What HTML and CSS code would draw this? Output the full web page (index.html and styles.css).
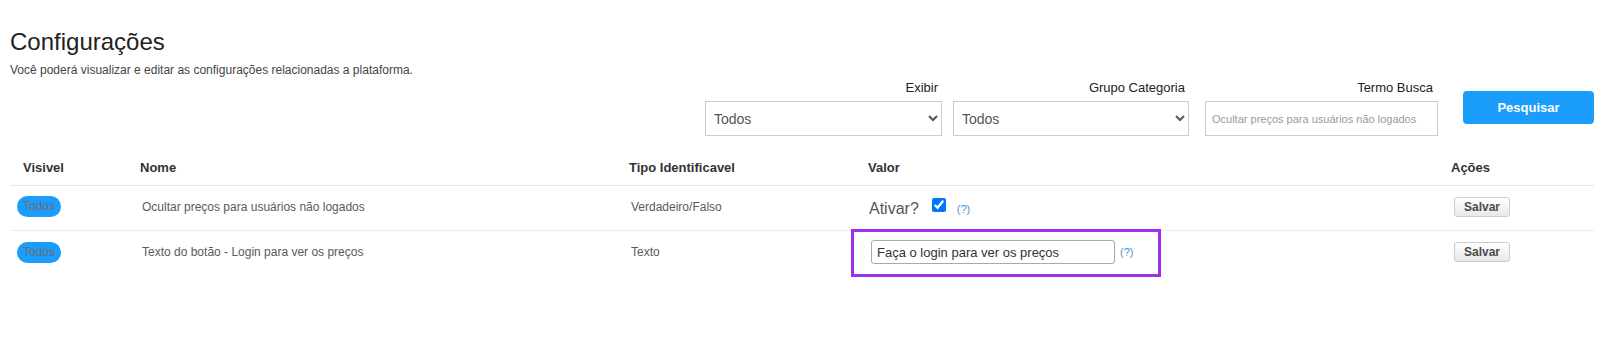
FILE: index.html
```html
<!DOCTYPE html>
<html lang="pt-BR">
<head>
    <meta charset="UTF-8">
    <meta name="viewport" content="width=device-width, initial-scale=1.0">
    <title>Configurações</title>
    <link rel="stylesheet" href="styles.css">
</head>
<body>
    <div class="page">
        <h1 class="title">Configurações</h1>
        <p class="subtitle">Você poderá visualizar e editar as configurações relacionadas a plataforma.</p>

        <form class="filters" onsubmit="return false">
            <div class="field field-exibir">
                <label for="exibir">Exibir</label>
                <select id="exibir">
                    <option>Todos</option>
                </select>
            </div>
            <div class="field field-grupo">
                <label for="grupo">Grupo Categoria</label>
                <select id="grupo">
                    <option>Todos</option>
                </select>
            </div>
            <div class="field field-termo">
                <label for="termo">Termo Busca</label>
                <input id="termo" type="text" placeholder="Ocultar preços para usuários não logados">
            </div>
            <button class="btn-search" type="submit">Pesquisar</button>
        </form>

        <table class="config-table">
            <colgroup>
                <col class="col-visivel">
                <col class="col-nome">
                <col class="col-tipo">
                <col class="col-valor">
                <col class="col-acoes">
            </colgroup>
            <thead>
                <tr>
                    <th class="cell-visivel">Visivel</th>
                    <th>Nome</th>
                    <th>Tipo Identificavel</th>
                    <th>Valor</th>
                    <th>Ações</th>
                </tr>
            </thead>
            <tbody>
                <tr>
                    <td class="cell-visivel"><span class="badge">Todos</span></td>
                    <td class="cell-nome">Ocultar preços para usuários não logados</td>
                    <td class="cell-tipo">Verdadeiro/Falso</td>
                    <td class="cell-valor">
                        <div class="valor-bool">
                            <span class="ativar">Ativar?</span>
                            <input class="check" type="checkbox" checked>
                            <a class="help" href="#">(<b>?</b>)</a>
                        </div>
                    </td>
                    <td class="cell-acoes"><button class="btn-save">Salvar</button></td>
                </tr>
                <tr>
                    <td class="cell-visivel"><span class="badge">Todos</span></td>
                    <td class="cell-nome">Texto do botão - Login para ver os preços</td>
                    <td class="cell-tipo">Texto</td>
                    <td class="cell-valor">
                        <div class="highlight">
                            <input class="text-input" type="text" value="Faça o login para ver os preços">
                            <a class="help" href="#">(<b>?</b>)</a>
                        </div>
                    </td>
                    <td class="cell-acoes"><button class="btn-save">Salvar</button></td>
                </tr>
            </tbody>
        </table>
    </div>
</body>
</html>
```

FILE: styles.css
```css
body {
    margin: 0;
    padding: 0;
    background-color: #ffffff;
    font-family: "Liberation Sans", Arial, Helvetica, sans-serif;
    color: #333333;
}

.page {
    padding: 27px 6px 60px 10px;
}

.title {
    margin: 0;
    font-size: 24px;
    line-height: 29px;
    font-weight: normal;
    color: #222222;
}

.subtitle {
    margin: 6px 0 0;
    font-size: 12px;
    line-height: 16px;
    color: #444444;
}

.filters {
    display: flex;
    justify-content: flex-end;
    align-items: flex-start;
    margin-top: 2px;
}

.field {
    display: flex;
    flex-direction: column;
}

.field label {
    text-align: right;
    font-size: 13px;
    line-height: 16px;
    padding-right: 4px;
    margin-bottom: 5px;
    color: #222222;
}

.field-exibir {
    width: 237px;
}

.field-grupo {
    width: 236px;
    margin-left: 11px;
}

.field-termo {
    width: 233px;
    margin-left: 16px;
}

.field-termo label {
    padding-right: 5px;
}

.field select,
.field input {
    box-sizing: border-box;
    height: 35px;
    border: 1px solid #cccccc;
    border-radius: 0;
    background-color: #ffffff;
    font-family: inherit;
    outline: none;
}

.field select {
    font-size: 14px;
    color: #555555;
    padding: 0 4px;
}

.field input {
    font-size: 11px;
    padding: 0 6px;
    color: #555555;
}

.field input::placeholder {
    color: #9a9a9a;
}

.btn-search {
    width: 131px;
    height: 33px;
    margin-top: 11px;
    margin-left: 25px;
    border: none;
    border-radius: 4px;
    background-color: #1b9dfc;
    color: #ffffff;
    font-family: inherit;
    font-size: 13px;
    font-weight: bold;
    cursor: pointer;
}

.config-table {
    width: 100%;
    margin-top: 13px;
    border-collapse: separate;
    border-spacing: 0;
    table-layout: fixed;
}

.col-visivel { width: 122px; }
.col-nome { width: 489px; }
.col-tipo { width: 239px; }
.col-valor { width: 583px; }
.col-acoes { width: 151px; }

.config-table th {
    text-align: left;
    padding: 11px 8px 9px;
    font-size: 13px;
    line-height: 16px;
    font-weight: bold;
    color: #333333;
    border-bottom: 1px solid #e6e6e6;
}

.config-table th.cell-visivel {
    padding-left: 13px;
}

.config-table td {
    box-sizing: border-box;
    height: 45px;
    padding: 0 8px 3px;
    font-size: 12px;
    color: #5a5a5a;
    vertical-align: middle;
    border-bottom: 1px solid #ececec;
}

.config-table tbody tr:last-child td {
    border-bottom: none;
}

.config-table td.cell-visivel {
    padding-left: 7px;
}

.config-table td.cell-nome {
    padding-left: 10px;
}

.config-table td.cell-tipo {
    padding-left: 10px;
}

.config-table td.cell-valor {
    padding-left: 9px;
}

.config-table td.cell-acoes {
    padding-left: 11px;
}

.badge {
    display: inline-block;
    height: 21px;
    line-height: 21px;
    padding: 0 6px;
    border-radius: 11px;
    background-color: #1b9dfc;
    color: #6e6e6e;
    font-size: 12px;
}

.valor-bool {
    display: flex;
    align-items: flex-start;
    height: 20px;
    margin-top: 3px;
}

.ativar {
    font-size: 16px;
    line-height: 18px;
    margin-top: 2px;
    color: #555555;
    margin-right: 13px;
}

.check {
    width: 14px;
    height: 14px;
    margin: 0 11px 0 0;
    accent-color: #0075ff;
}

.help {
    font-size: 11px;
    line-height: 13px;
    color: #6b8bb0;
    text-decoration: none;
}

.valor-bool .help {
    margin-top: 5px;
}

.help b {
    font-weight: normal;
    color: #1b9dfc;
}

.highlight {
    box-sizing: border-box;
    display: flex;
    align-items: center;
    gap: 5px;
    width: 310px;
    height: 48px;
    margin: -2px 0 -4px -18px;
    padding: 0 0 2px 17px;
    border: 3px solid #a32cf5;
}

.text-input {
    box-sizing: border-box;
    width: 244px;
    height: 24px;
    padding: 0 5px;
    border: 1px solid #a9a9a9;
    border-radius: 3px;
    font-family: inherit;
    font-size: 13px;
    color: #333333;
    outline: none;
}

.btn-save {
    height: 20px;
    padding: 0 9px;
    border: 1px solid #cccccc;
    border-radius: 3px;
    background: linear-gradient(#ffffff, #e8e8e8);
    color: #4a4a4a;
    font-family: inherit;
    font-size: 12px;
    font-weight: bold;
    cursor: pointer;
}
```
